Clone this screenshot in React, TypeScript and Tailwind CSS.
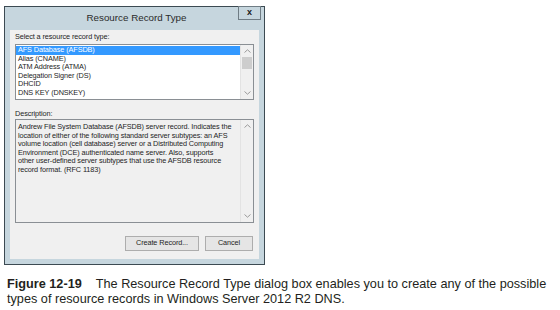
import React from 'react';

const records = [
  'AFS Database (AFSDB)',
  'Alias (CNAME)',
  'ATM Address (ATMA)',
  'Delegation Signer (DS)',
  'DHCID',
  'DNS KEY (DNSKEY)',
];

const description = [
  'Andrew File System Database (AFSDB) server record. Indicates the',
  'location of either of the following standard server subtypes: an AFS',
  'volume location (cell database) server or a Distributed Computing',
  'Environment (DCE) authenticated name server. Also, supports',
  'other user-defined server subtypes that use the AFSDB resource',
  'record format. (RFC 1183)',
];

function ScrollBar({ thumb }: { thumb: boolean }) {
  return (
    <div className="flex w-[13px] flex-col border-l border-[#e3e3e3] bg-[#f0f0f0]">
      <div className="flex h-[12px] items-center justify-center text-[#9a9a9a]">
        <svg width="7" height="4" viewBox="0 0 7 4">
          <path d="M0.5 3.5 L3.5 0.8 L6.5 3.5" fill="none" stroke="currentColor" strokeWidth="1" />
        </svg>
      </div>
      {thumb ? <div className="mx-[1px] h-[12px] bg-[#cdcdcd]" /> : null}
      <div className="flex-1" />
      <div className="flex h-[12px] items-center justify-center text-[#9a9a9a]">
        <svg width="7" height="4" viewBox="0 0 7 4">
          <path d="M0.5 0.5 L3.5 3.2 L6.5 0.5" fill="none" stroke="currentColor" strokeWidth="1" />
        </svg>
      </div>
    </div>
  );
}

export default function App() {
  return (
    <div className="h-[310px] w-[560px] bg-white pl-[4px] pt-[6px] font-['Liberation_Sans',Arial,sans-serif]">
      <div className="flex h-[259px] w-[261px] flex-col border border-[#3c4a52] bg-[#c6d6de]">
        {/* title bar */}
        <div className="relative flex h-[23px] items-center justify-center">
          <span className="pl-[4px] text-[9.8px] text-[#2b2b2b]">Resource Record Type</span>
          <div className="absolute right-[3px] top-[-1px] flex h-[14px] w-[23px] items-center justify-center border border-[#6f7c84] bg-[#c6d6de] text-[9px] font-bold text-[#1a1a1a]">
            x
          </div>
        </div>
        {/* client area */}
        <div className="mx-[5px] mb-[5px] flex flex-1 flex-col bg-[#f0f0f0] px-[5px] pt-[3px] text-[7.3px] leading-[8.6px] tracking-[-0.1px] text-[#1e1e1e]">
          <div className="h-[11px]">Select a resource record type:</div>
          <div className="flex h-[56px] border border-[#8a8f94] bg-white">
            <div className="flex-1 pt-[1px]">
              {records.map((r, i) => (
                <div
                  key={r}
                  className={i === 0 ? 'h-[8.6px] bg-[#3399ff] pl-[2px] text-white' : 'h-[8.6px] pl-[2px]'}
                >
                  {r}
                </div>
              ))}
            </div>
            <ScrollBar thumb />
          </div>
          <div className="mt-[10px] h-[9px]">Description:</div>
          <div className="flex h-[104px] border border-[#8a8f94] bg-[#f0f0f0]">
            <div className="flex-1 whitespace-nowrap px-[2px] pt-[3px]">
              {description.map((l) => (
                <div key={l}>{l}</div>
              ))}
            </div>
            <ScrollBar thumb={false} />
          </div>
          <div className="mt-[13px] flex justify-end gap-[6px] pr-[1px]">
            <div className="flex h-[15px] w-[74px] items-center justify-center border border-[#adadad] bg-[#e5e5e5]">
              Create Record...
            </div>
            <div className="flex h-[15px] w-[48px] items-center justify-center border border-[#adadad] bg-[#e5e5e5]">
              Cancel
            </div>
          </div>
        </div>
      </div>
      <div className="mt-[12px] pl-[3px] text-[12.7px] leading-[15px] text-[#231f20]">
        <span className="font-bold">Figure 12-19</span>
        <span className="ml-[14px]">The Resource Record Type dialog box enables you to create any of the possible</span>
        <br />
        types of resource records in Windows Server 2012 R2 DNS.
      </div>
    </div>
  );
}
